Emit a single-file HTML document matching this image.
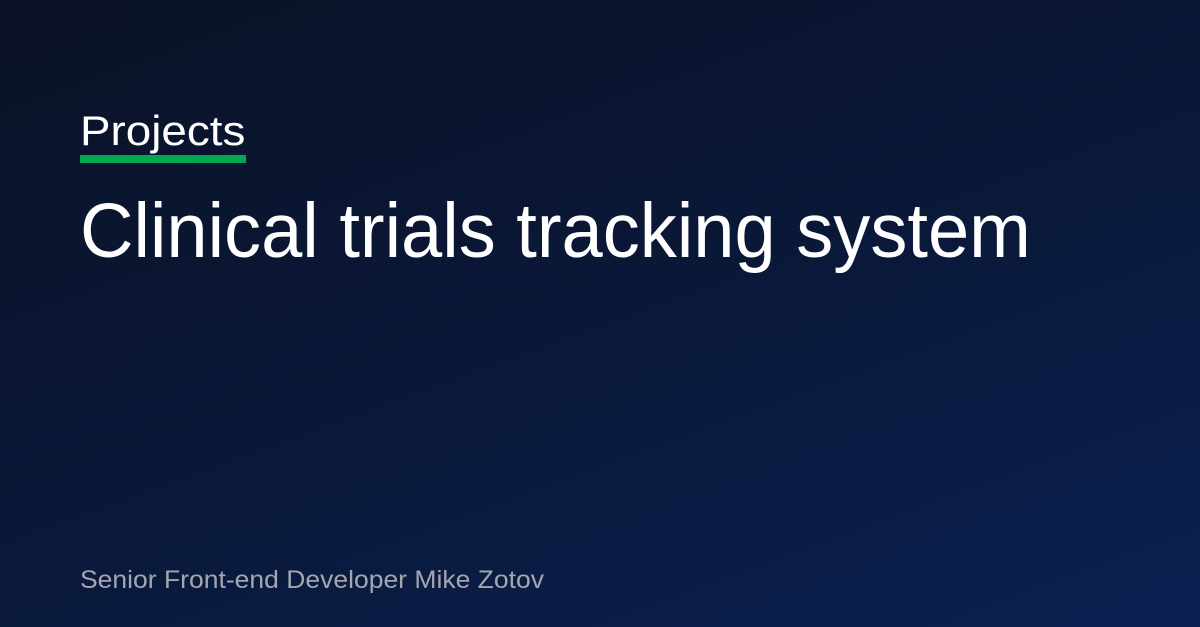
<!DOCTYPE html>
<html><head><style>
html,body{margin:0;padding:0}
body{width:1200px;height:627px;overflow:hidden;position:relative;background:linear-gradient(160deg,#0b1227 0%,#0a1838 50%,#0a2152 100%);font-family:"Liberation Sans",sans-serif;}
.t{position:absolute;left:80px;white-space:nowrap;transform-origin:0 0;}
#p{top:107px;font-size:42px;color:#fff;transform:scaleX(1.09);}
#bar{position:absolute;left:80px;top:155px;width:166px;height:8px;background:#00a84f;}
#h{top:187px;font-size:77px;color:#fff;transform:scaleX(0.962);}
#s{top:566px;font-size:25px;color:#a3a6ae;transform:scaleX(1.06);}
</style></head><body>
<div class="t" id="p">Projects</div>
<div id="bar"></div>
<div class="t" id="h">Clinical trials tracking system</div>
<div class="t" id="s">Senior Front-end Developer Mike Zotov</div>
</body></html>
